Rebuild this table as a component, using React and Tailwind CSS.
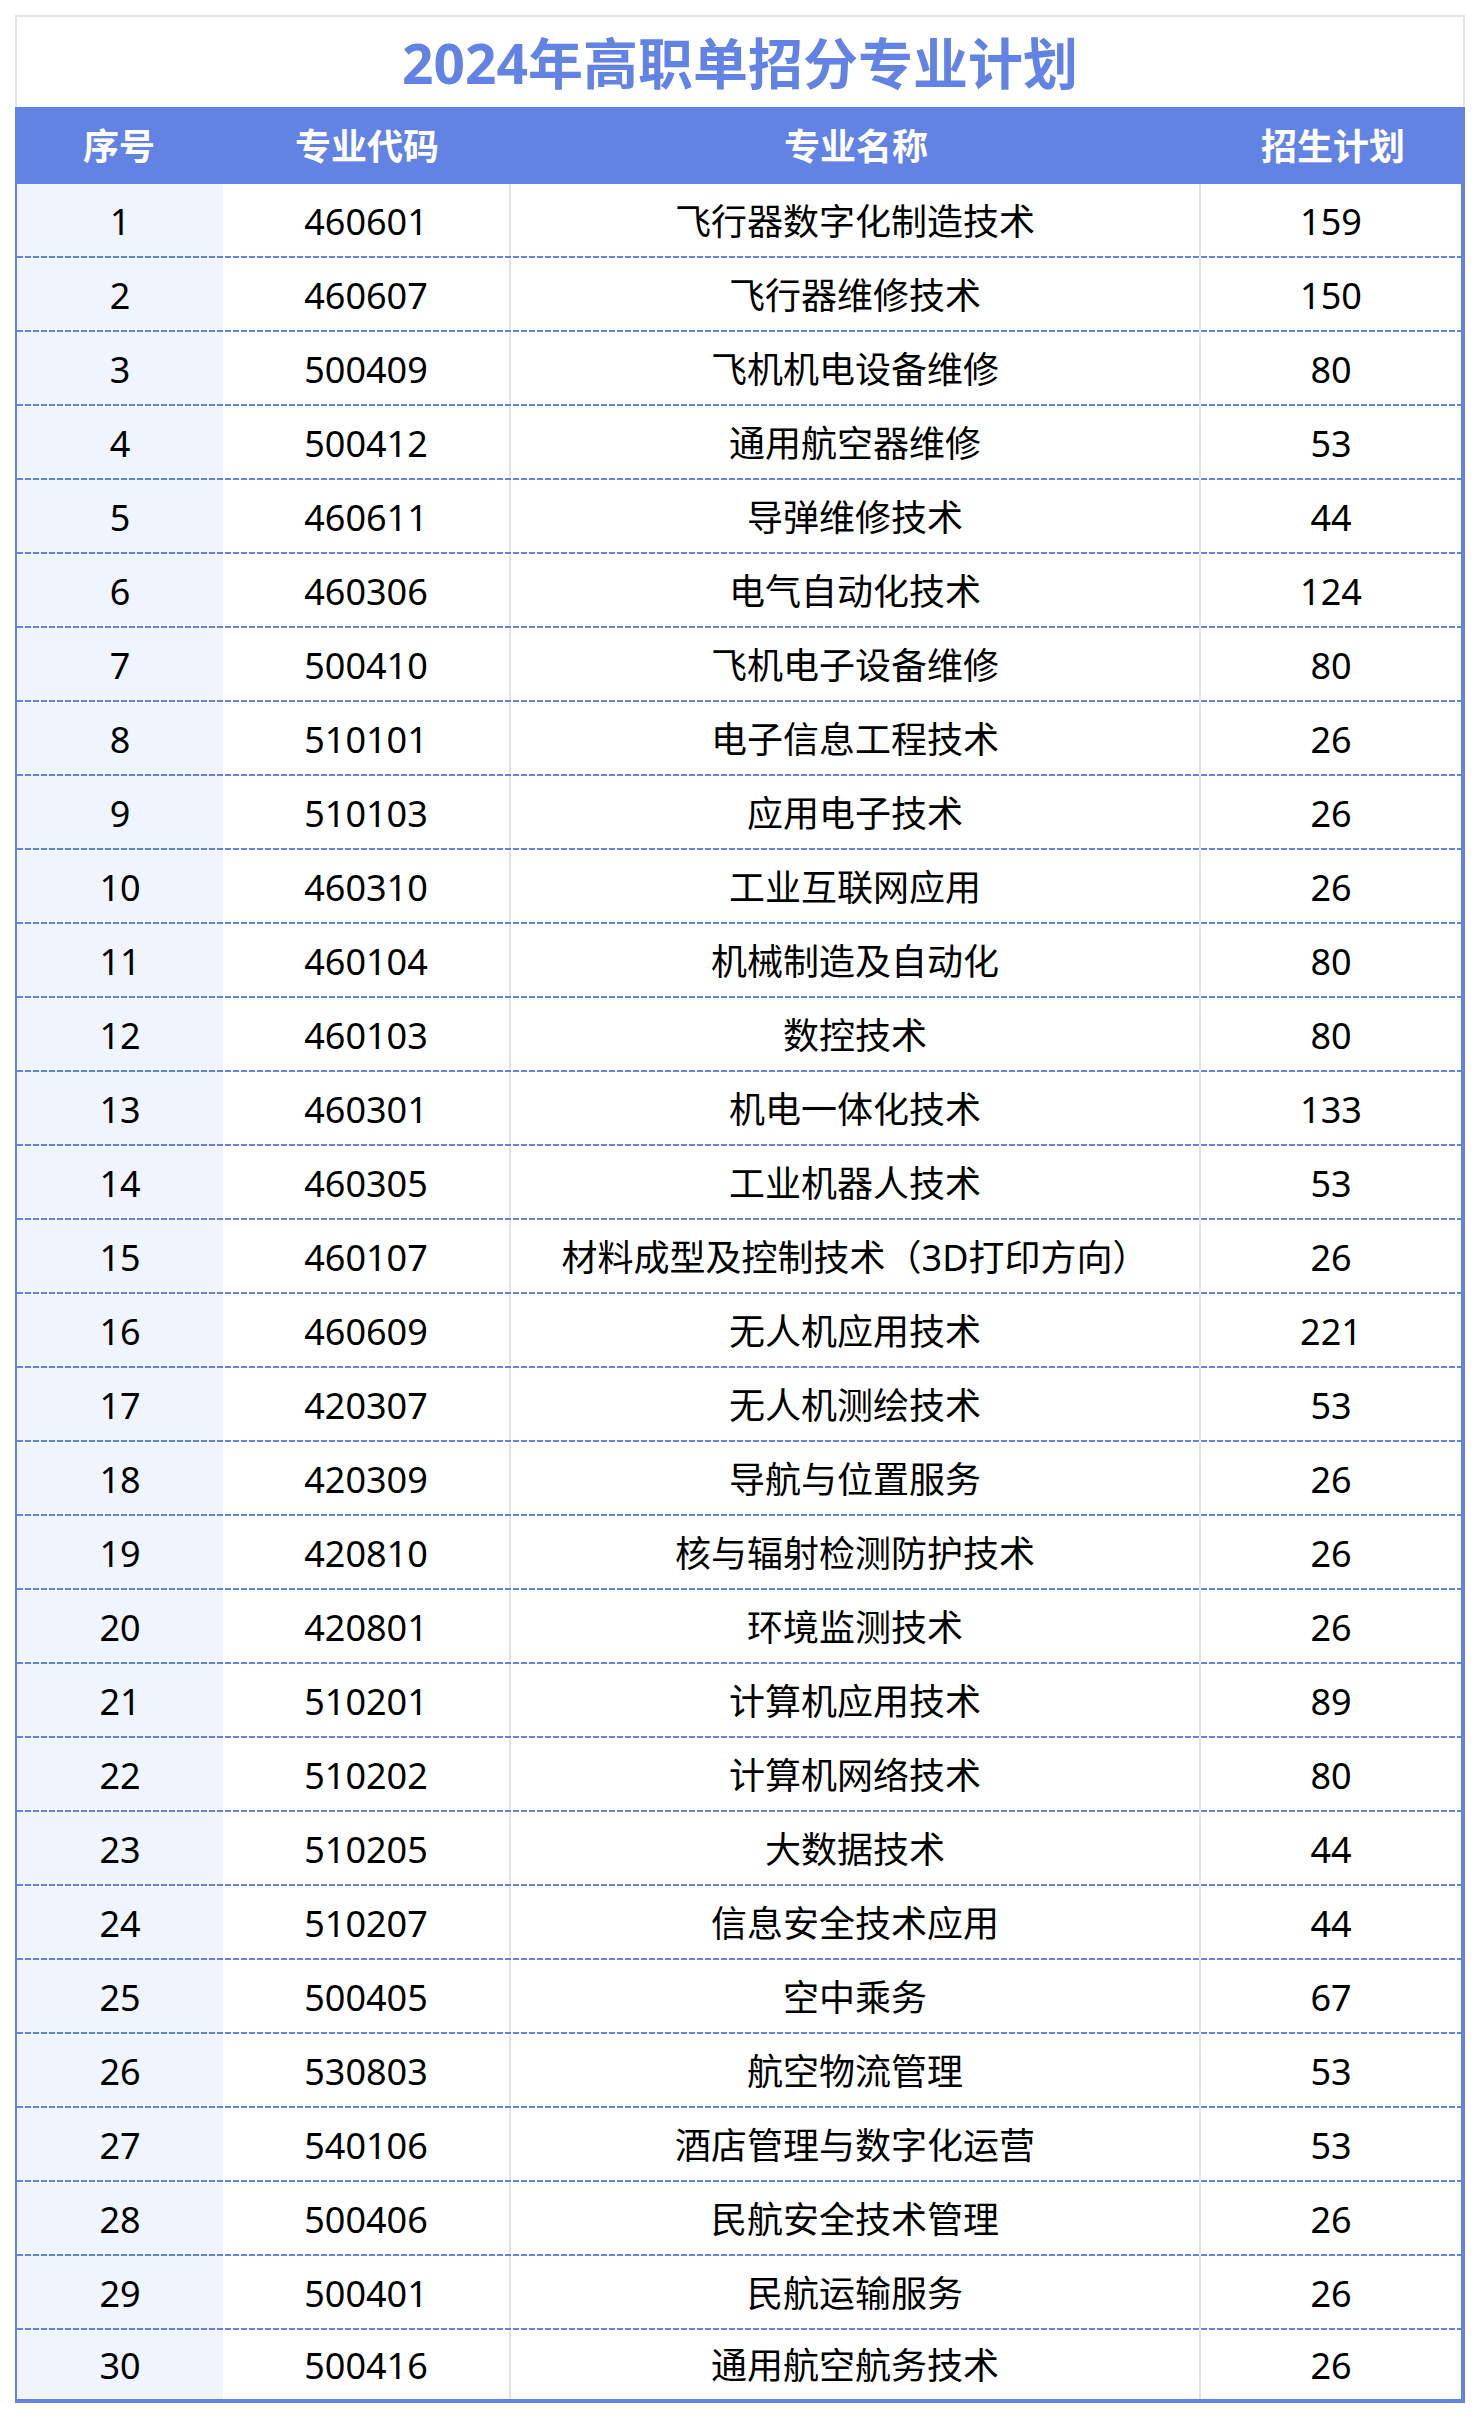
const rows = [
  [1, "460601", "飞行器数字化制造技术", 159],
  [2, "460607", "飞行器维修技术", 150],
  [3, "500409", "飞机机电设备维修", 80],
  [4, "500412", "通用航空器维修", 53],
  [5, "460611", "导弹维修技术", 44],
  [6, "460306", "电气自动化技术", 124],
  [7, "500410", "飞机电子设备维修", 80],
  [8, "510101", "电子信息工程技术", 26],
  [9, "510103", "应用电子技术", 26],
  [10, "460310", "工业互联网应用", 26],
  [11, "460104", "机械制造及自动化", 80],
  [12, "460103", "数控技术", 80],
  [13, "460301", "机电一体化技术", 133],
  [14, "460305", "工业机器人技术", 53],
  [15, "460107", "材料成型及控制技术（3D打印方向）", 26],
  [16, "460609", "无人机应用技术", 221],
  [17, "420307", "无人机测绘技术", 53],
  [18, "420309", "导航与位置服务", 26],
  [19, "420810", "核与辐射检测防护技术", 26],
  [20, "420801", "环境监测技术", 26],
  [21, "510201", "计算机应用技术", 89],
  [22, "510202", "计算机网络技术", 80],
  [23, "510205", "大数据技术", 44],
  [24, "510207", "信息安全技术应用", 44],
  [25, "500405", "空中乘务", 67],
  [26, "530803", "航空物流管理", 53],
  [27, "540106", "酒店管理与数字化运营", 53],
  [28, "500406", "民航安全技术管理", 26],
  [29, "500401", "民航运输服务", 26],
  [30, "500416", "通用航空航务技术", 26],
];

const font = { fontFamily: '"Noto Sans", "Noto Sans CJK SC", sans-serif' };

export default function App() {
  return (
    <div className="w-[1480px] h-[2420px] bg-white pt-[15px] pl-[15px]" style={font}>
      <div className="w-[1450px]">
        <div className="h-[92px] border-t-2 border-x-2 border-[#e4e4e4] flex items-center justify-center">
          <span className="text-[55px] leading-none font-bold text-[#6383e4]">2024年高职单招分专业计划</span>
        </div>
        <div className="h-[77px] pt-[3px] bg-[#6383e4] grid grid-cols-[208px_288px_690px_264px] text-white text-[36px] font-bold leading-none">
          <div className="flex items-center justify-center">序号</div>
          <div className="flex items-center justify-center">专业代码</div>
          <div className="flex items-center justify-center">专业名称</div>
          <div className="flex items-center justify-center">招生计划</div>
        </div>
        <div className="border-l-2 border-r-4 border-b-4 border-[#6383e4] bg-[linear-gradient(90deg,#f0f4fd_0_206px,#ffffff_206px)]">
          {rows.map((r, i) => {
            const last = i === rows.length - 1;
            return (
              <div key={r[0]} className="flex flex-col">
                <div className={(last ? "h-[69px]" : "h-[72px]") + " grid grid-cols-[206px_288px_690px_260px] text-[36px] leading-none text-black"}>
                  <div className="flex items-center justify-center pt-[3px]">{r[0]}</div>
                  <div className="flex items-center justify-center pt-[3px] border-r-2 border-[#e2e2e2]">{r[1]}</div>
                  <div className="flex items-center justify-center pt-[3px] border-r-2 border-[#e2e2e2] whitespace-nowrap">{r[2]}</div>
                  <div className="flex items-center justify-center pt-[3px]">{r[3]}</div>
                </div>
                {!last && (
                  <div className="h-[2px] bg-[repeating-linear-gradient(90deg,#6383e4_0_6px,transparent_6px_8px)]" />
                )}
              </div>
            );
          })}
        </div>
      </div>
    </div>
  );
}
